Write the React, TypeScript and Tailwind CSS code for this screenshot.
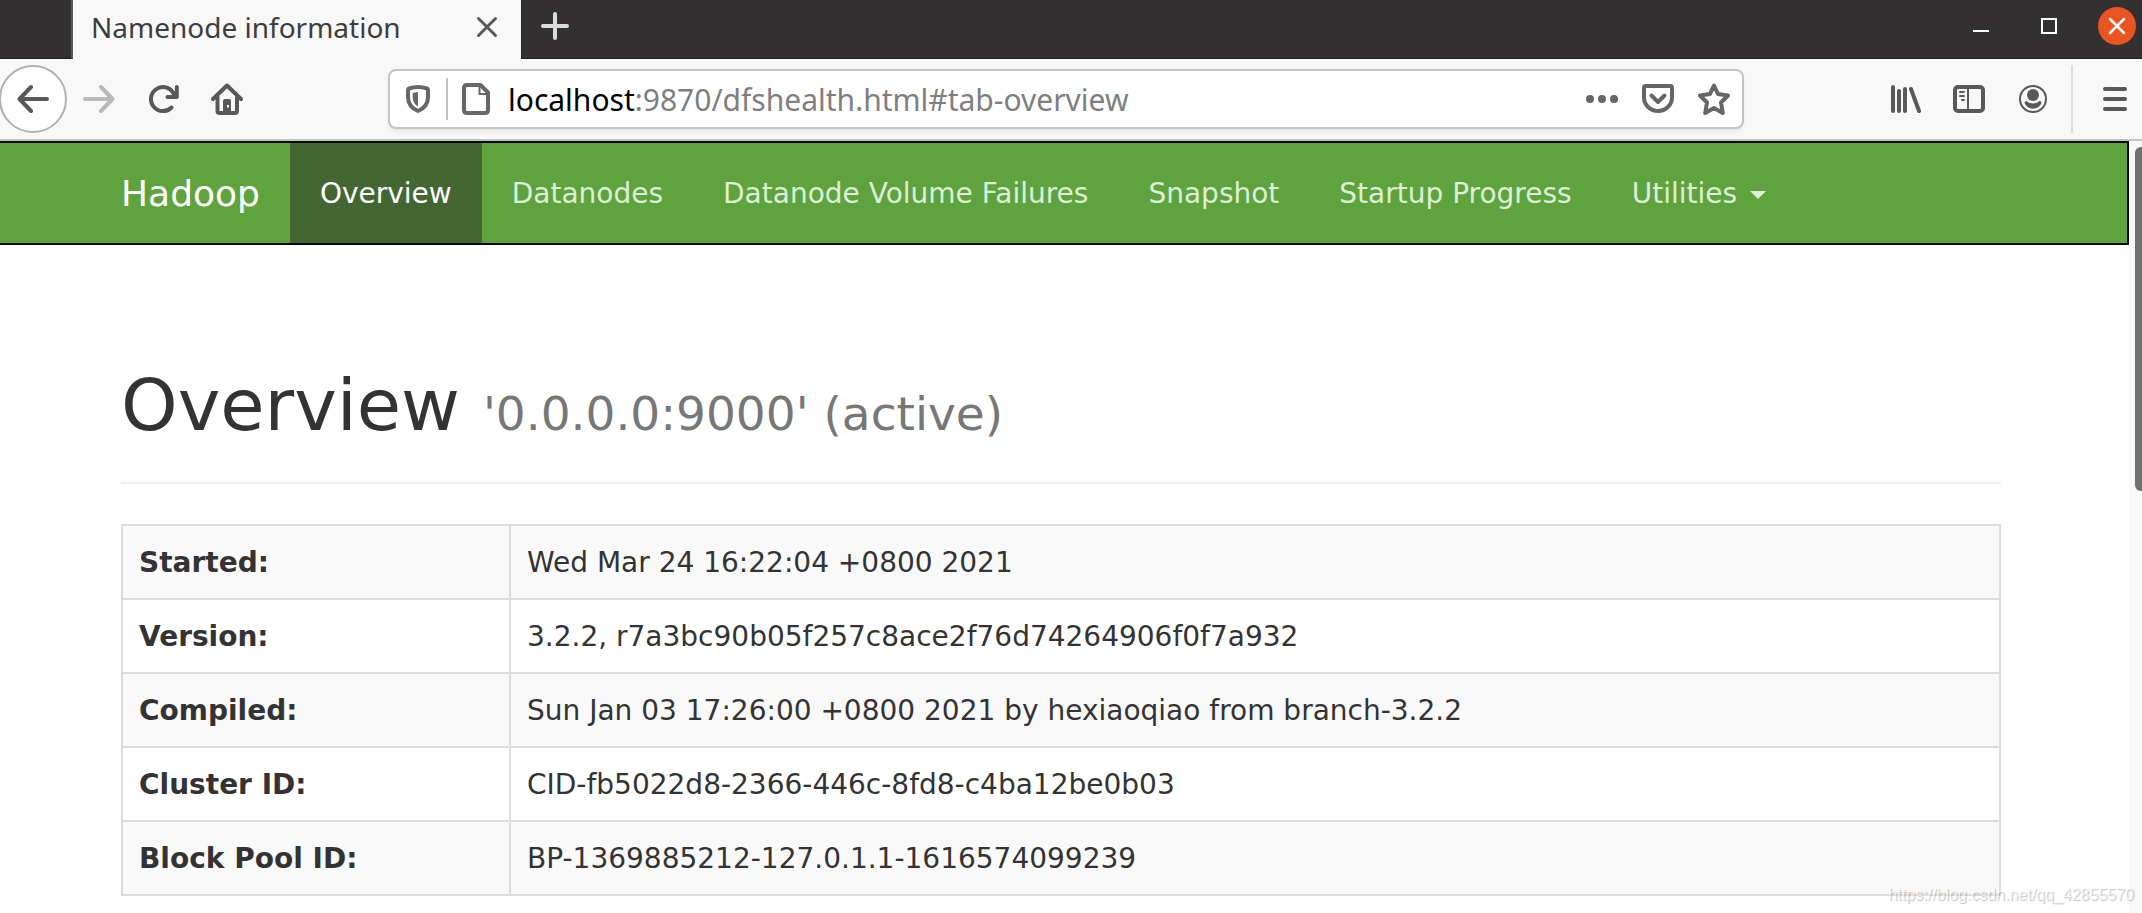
import type { ReactNode } from "react";

const navItems = [
  "Overview",
  "Datanodes",
  "Datanode Volume Failures",
  "Snapshot",
  "Startup Progress",
];

const rows = [
  ["Started:", "Wed Mar 24 16:22:04 +0800 2021"],
  ["Version:", "3.2.2, r7a3bc90b05f257c8ace2f76d74264906f0f7a932"],
  ["Compiled:", "Sun Jan 03 17:26:00 +0800 2021 by hexiaoqiao from branch-3.2.2"],
  ["Cluster ID:", "CID-fb5022d8-2366-446c-8fd8-c4ba12be0b03"],
  ["Block Pool ID:", "BP-1369885212-127.0.1.1-1616574099239"],
];

function Icon({ children }: { children: ReactNode }) {
  return (
    <svg
      viewBox="0 0 32 32"
      className="size-8 shrink-0"
      fill="none"
      stroke="currentColor"
      strokeWidth="4"
      strokeLinecap="round"
      strokeLinejoin="round"
      aria-hidden="true"
    >
      {children}
    </svg>
  );
}

function IconButton({
  label,
  children,
  className = "",
}: {
  label: string;
  children: ReactNode;
  className?: string;
}) {
  return (
    <button type="button" aria-label={label} className={`flex shrink-0 items-center justify-center ${className}`}>
      {children}
    </button>
  );
}

function TitleBar() {
  return (
    <div className="flex h-[59px] bg-[#333031]">
      <div className="w-[73px] shrink-0 border-r-2 border-b border-[#1f1d1e] border-r-[#5a5859]" />
      <div className="flex w-[448px] shrink-0 items-center justify-between bg-[#f8f8f8] px-[18px] pb-[6px]">
        <span className="text-[28px] leading-10 whitespace-nowrap text-[#3d3d3d]">Namenode information</span>
        <IconButton label="Close tab" className="text-[#58585a]">
          <Icon>
            <path d="M7.500 7.500L24.500 24.500M24.500 7.500L7.500 24.500" strokeWidth="3" />
          </Icon>
        </IconButton>
      </div>
      <div className="flex grow items-center justify-between border-b border-l border-[#1f1d1e] pr-[6px] pb-[6px] pl-[17px]">
        <IconButton label="New tab" className="text-[#dcdcdc]">
          <Icon>
            <path d="M16 4V28M4 16H28" />
          </Icon>
        </IconButton>
        <div className="flex items-center text-white">
          <IconButton label="Minimize" className="mr-9">
            <Icon>
              <path d="M8 21H24" strokeWidth="2" strokeLinecap="butt" />
            </Icon>
          </IconButton>
          <IconButton label="Maximize" className="mr-[33px]">
            <Icon>
              <path d="M9 9H23V23H9Z" strokeWidth="2" strokeLinejoin="miter" />
            </Icon>
          </IconButton>
          <IconButton label="Close window" className="size-[38px] rounded-full bg-[#e95420]">
            <Icon>
              <path d="M9 9L23 23M23 9L9 23" strokeWidth="2.500" />
            </Icon>
          </IconButton>
        </div>
      </div>
    </div>
  );
}

function ToolBar() {
  return (
    <div className="flex h-[82px] items-center border-b-2 border-[#c4c4c4] bg-[#f8f8f8] text-[#58585a]">
      <IconButton label="Back" className="-ml-px size-[68px] rounded-full border-2 border-[#b1b1b1] bg-white">
        <Icon>
          <path d="M30 16H3M14 4L2.500 16L14 28" />
        </Icon>
      </IconButton>
      <IconButton label="Forward" className="ml-4 text-[#b9b9b9]">
        <Icon>
          <path d="M2 16H29M18 4L29.500 16L18 28" />
        </Icon>
      </IconButton>
      <IconButton label="Reload" className="ml-8">
        <Icon>
          <path d="M24.500 24.500A12 12 0 1 1 26 9.500L28 13" />
          <path d="M29.800 4V14H20.500" />
        </Icon>
      </IconButton>
      <IconButton label="Home" className="ml-8">
        <Icon>
          <path d="M2 16L16 2.500L30 16M6.500 14V28Q6.500 30 8.500 30H24Q26 30 26 28V14" />
          <path d="M12 30V18Q12 16 14 16H18Q20 16 20 18V30Z" fill="currentColor" stroke="none" />
          <path d="M16 22H18V24.500H16Z" fill="#f8f8f8" stroke="none" />
        </Icon>
      </IconButton>
      <div className="mx-[145px] flex h-[60px] grow items-center rounded-lg border-2 border-[#c4c4c4] bg-white px-3 text-[#666668] shadow-md shadow-black/5">
        <IconButton label="Tracking protection">
          <Icon>
            <path d="M6 7Q6 5.800 7 5.500Q16 2.500 25 5.500Q26 5.800 26 7V14C26 21 22 25.500 16 28C10 25.500 6 21 6 14Z" />
            <path d="M10.700 10L16 9V23.500C12.500 21.500 10.700 18.500 10.700 14Z" fill="currentColor" stroke="none" />
          </Icon>
        </IconButton>
        <span className="mx-3 h-[42px] w-[2px] shrink-0 bg-[#c4c4c4]" />
        <IconButton label="Site information">
          <Icon>
            <path d="M7 2H20.500L28 9.500V27Q28 30 25 30H7Q4 30 4 27V5Q4 2 7 2Z" />
            <path d="M19.500 3V11H27" strokeWidth="2" />
          </Icon>
        </IconButton>
        <div className="ml-4 grow pt-[2px] text-[30px] leading-10 whitespace-nowrap text-[#7f7f80]">
          <span className="text-black">localhost</span>:9870/dfshealth.html#tab-overview
        </div>
        <IconButton label="Page actions" className="mr-6">
          <Icon>
            <path d="M4 16H4.010M16 16H16.010M28 16H28.010" strokeWidth="8" />
          </Icon>
        </IconButton>
        <IconButton label="Save to Pocket" className="mr-6">
          <Icon>
            <path d="M2 4.500Q2 3 3.500 3H28.500Q30 3 30 4.500V14.500A14 13.500 0 0 1 2 14.500Z" />
            <path d="M9.500 12.500L16 19L22.500 12.500" />
          </Icon>
        </IconButton>
        <IconButton label="Bookmark this page">
          <Icon>
            <path d="M16 2.500L20 11L30 12.500L23 19.500L24.800 30L16 25L7.200 30L9 19.500L2 12.500L12 11Z" />
          </Icon>
        </IconButton>
      </div>
      <IconButton label="Library" className="mr-8">
        <Icon>
          <path d="M4 4V28M10 8V28M16 6V28M22 6L30 28" />
        </Icon>
      </IconButton>
      <IconButton label="Sidebars" className="mr-8">
        <Icon>
          <rect x="2" y="4" width="28" height="24" rx="3" />
          <path d="M15 5V27M7 9H11M7 13H11M9 17H11" strokeWidth="2" />
        </Icon>
      </IconButton>
      <IconButton label="Account" className="mr-[22px]">
        <Icon>
          <circle cx="16" cy="16" r="13" strokeWidth="2" />
          <circle cx="16" cy="12" r="6" fill="currentColor" stroke="none" />
          <path
            d="M7.500 20Q7.500 18 9.500 18Q12 20.500 16 20.500Q20 20.500 22.500 18Q24.500 18 24.500 20Q22 25.700 16 25.700Q10 25.700 7.500 20Z"
            fill="currentColor"
            stroke="none"
          />
        </Icon>
      </IconButton>
      <span className="h-[68px] w-[2px] shrink-0 bg-[#dcdcdc]" />
      <IconButton label="Open menu" className="mr-[11px] ml-[26px]">
        <Icon>
          <path d="M6 6H26M6 16H26M6 26H26" />
        </Icon>
      </IconButton>
    </div>
  );
}

function NavBar() {
  return (
    <nav className="flex border-y-2 border-r-2 border-[#080808] bg-[#5fa33e] pl-[121px] leading-10 whitespace-nowrap text-[#dcefd7]">
      <a href="#top" className="pt-[31px] pr-[30px] pb-[29px] text-[36px] text-white">
        Hadoop
      </a>
      {navItems.map((item) => (
        <a
          key={item}
          href="#tab"
          aria-current={item === "Overview" ? "page" : undefined}
          className="px-[30px] pt-[31px] pb-[29px] aria-[current=page]:bg-[#446633] aria-[current=page]:text-white"
        >
          {item}
        </a>
      ))}
      <a href="#utilities" className="flex items-center px-[30px] pt-[31px] pb-[29px]">
        Utilities
        <span className="mt-[2px] ml-[13px] border-x-8 border-t-8 border-x-transparent border-t-[#dcefd7]" />
      </a>
    </nav>
  );
}

export default function App() {
  return (
    <div className="relative flex min-h-screen flex-col bg-white font-['Noto_Sans',sans-serif]">
      <TitleBar />
      <ToolBar />
      <div className="flex grow font-['DejaVu_Sans',sans-serif] text-[28px] text-[#333]">
        <div className="grow">
          <NavBar />
          <main className="pt-[121px] pr-[128px] pl-[121px]">
            <h1 className="mb-10 border-b-2 border-[#eee] pb-[37px] text-[72px] leading-[79px]">
              Overview <small className="text-[47px] leading-none text-[#777]">'0.0.0.0:9000' (active)</small>
            </h1>
            <table className="w-full border-collapse text-left leading-10">
              <tbody>
                {rows.map(([name, value]) => (
                  <tr key={name} className="odd:bg-[#f9f9f9]">
                    <th scope="row" className="w-[388px] border-2 border-[#ddd] px-4 pt-[17px] pb-[15px] font-bold">
                      {name}
                    </th>
                    <td className="border-2 border-[#ddd] px-4 pt-[17px] pb-[15px]">{value}</td>
                  </tr>
                ))}
              </tbody>
            </table>
          </main>
        </div>
        <div className="w-[13px] shrink-0 bg-[#f8f8f8] pt-[6px] pl-[6px]">
          <div className="h-[344px] rounded-l-md bg-[#6e6e6e]" />
        </div>
      </div>
      <div className="absolute right-2 bottom-[6px] font-['Liberation_Sans',sans-serif] text-[16px] leading-6 text-white/70 [text-shadow:1px_1px_1px_rgba(0,0,0,0.25)]">
        https://blog.csdn.net/qq_42855570
      </div>
    </div>
  );
}
